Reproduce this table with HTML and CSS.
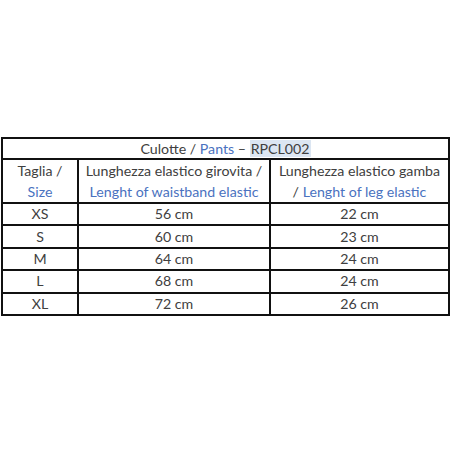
FILE: index.html
```html
<!DOCTYPE html>
<html>
<head>
<meta charset="utf-8">
<link rel="stylesheet" href="styles.css">
</head>
<body>
<div class="page">
<table class="sizes">
  <colgroup><col class="c1"><col class="c2"><col class="c3"></colgroup>
  <tr class="title"><td colspan="3">Culotte / <span class="en">Pants</span> – <span class="hl">RPCL002</span></td></tr>
  <tr class="head">
    <td>Taglia /<br><span class="en">Size</span></td>
    <td>Lunghezza elastico girovita /<br><span class="en">Lenght of waistband elastic</span></td>
    <td>Lunghezza elastico gamba<br>/ <span class="en">Lenght of leg elastic</span></td>
  </tr>
  <tr><td>XS</td><td>56 cm</td><td>22 cm</td></tr>
  <tr><td>S</td><td>60 cm</td><td>23 cm</td></tr>
  <tr><td>M</td><td>64 cm</td><td>24 cm</td></tr>
  <tr><td>L</td><td>68 cm</td><td>24 cm</td></tr>
  <tr><td>XL</td><td>72 cm</td><td>26 cm</td></tr>
</table>
</div>
</body>
</html>
```
FILE: styles.css
```css
html, body { margin: 0; padding: 0; background: #fff; }
.page { width: 450px; height: 450px; padding-top: 137px; padding-left: 1px; box-sizing: border-box; }
.sizes {
  border-collapse: collapse;
  width: 447px;
  table-layout: fixed;
  font-family: "Lato", "Open Sans", sans-serif;
  font-size: 14.2px;
  color: #404040;
}
.c1 { width: 76px; }
.c2 { width: 192px; }
.c3 { width: 179px; }
.sizes td {
  border: 2px solid #111;
  text-align: center;
  padding: 0;
  height: 20.4px;
  line-height: 20px;
}
.title td { height: 19px; line-height: 19px; }
.head td { height: 42px; line-height: 21px; }
.en { color: #4a72c0; }
.hl { background: #dce6f2; padding: 0 1px; }
```
